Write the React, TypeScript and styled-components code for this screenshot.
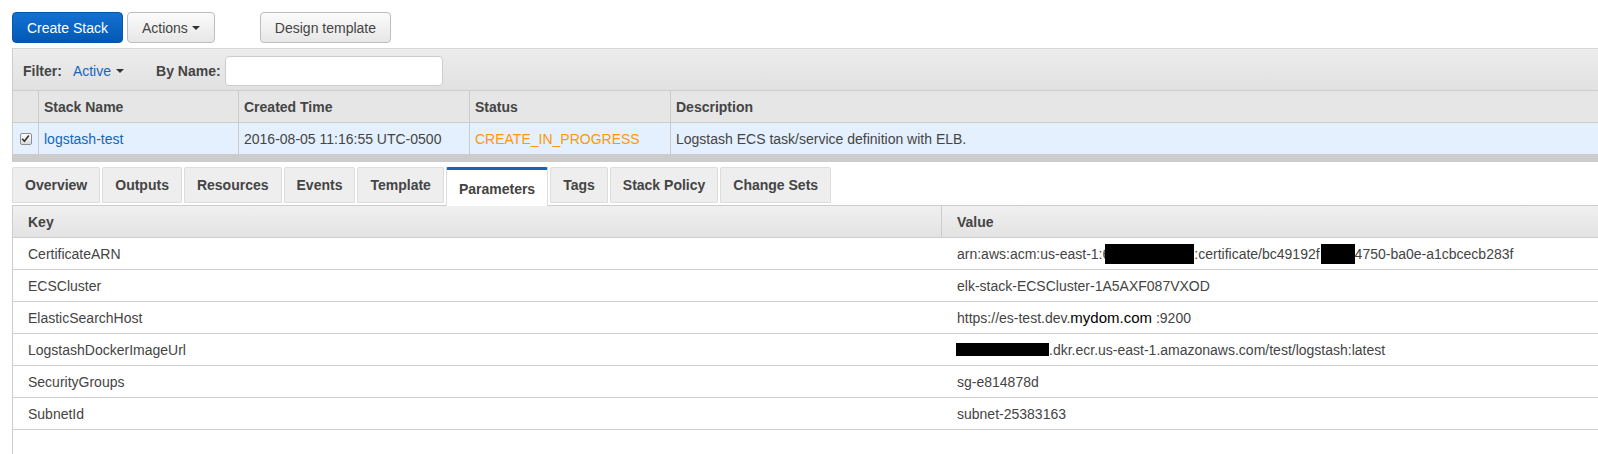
import React from "react";
import styled, { createGlobalStyle } from "styled-components";

const GlobalStyle = createGlobalStyle`
  html, body {
    margin: 0;
    padding: 0;
    background: #ffffff;
  }
  body {
    font-family: "Liberation Sans", Arial, Helvetica, sans-serif;
    font-size: 14px;
    color: #444444;
  }
  * { box-sizing: border-box; }
`;

const Page = styled.div`
  display: flex;
  flex-direction: column;
  width: 1598px;
  min-height: 454px;
  overflow: hidden;
`;

const Toolbar = styled.div`
  display: flex;
  align-items: center;
  gap: 4px;
  padding: 12px 0 0 12px;
  height: 43px;
`;

const Button = styled.button<{ $primary?: boolean; $spaced?: boolean }>`
  display: inline-flex;
  align-items: center;
  gap: 4px;
  height: 31px;
  padding: 0 14px;
  margin-left: ${(p) => (p.$spaced ? "41px" : "0")};
  font-family: inherit;
  font-size: 14px;
  border-radius: 4px;
  cursor: pointer;
  color: ${(p) => (p.$primary ? "#ffffff" : "#444444")};
  border: 1px solid ${(p) => (p.$primary ? "#0a56a6" : "#bdbdbd")};
  background: ${(p) =>
    p.$primary
      ? "linear-gradient(#1471d2, #0259b4)"
      : "linear-gradient(#fbfbfb, #e7e7e7)"};
`;

const Caret = styled.span`
  display: inline-block;
  width: 0;
  height: 0;
  border-left: 4px solid transparent;
  border-right: 4px solid transparent;
  border-top: 4px solid #333333;
`;

const StackPanel = styled.div`
  margin: 5px 0 0 12px;
  border-left: 1px solid #cccccc;
  border-top: 1px solid #d6d6d6;
`;

const FilterBar = styled.div`
  display: flex;
  align-items: center;
  height: 42px;
  padding: 2px 0 0 10px;
  background: linear-gradient(#ededed, #e1e1e1);
  border-bottom: 1px solid #cccccc;
`;

const FilterLabel = styled.span<{ $gap?: number }>`
  font-weight: bold;
  color: #444444;
  margin-left: ${(p) => p.$gap ?? 0}px;
`;

const FilterLink = styled.span`
  display: inline-flex;
  align-items: center;
  gap: 5px;
  margin-left: 11px;
  color: #1166bb;
`;

const SearchInput = styled.input`
  width: 218px;
  height: 30px;
  margin-left: 4px;
  border: 1px solid #cccccc;
  border-radius: 4px;
  background: #ffffff;
  font-family: inherit;
  font-size: 14px;
`;

const StackGrid = styled.div`
  display: grid;
  grid-template-columns: 26px 200px 231px 201px 1fr;
`;

const Cell = styled.div<{ $head?: boolean; $last?: boolean }>`
  display: flex;
  align-items: center;
  height: 32px;
  padding-left: 5px;
  white-space: nowrap;
  font-weight: ${(p) => (p.$head ? "bold" : "normal")};
  background: ${(p) => (p.$head ? "#e6e6e6" : "#e4f0fd")};
  border-bottom: 1px solid #cccccc;
  border-right: ${(p) => (p.$last ? "none" : "1px solid #cccccc")};
`;

const CheckCell = styled(Cell)`
  justify-content: center;
  padding-left: 0;
`;

const CheckBox = styled.span`
  display: inline-flex;
  align-items: center;
  justify-content: center;
  width: 12px;
  height: 12px;
  border: 1px solid #8e8e8e;
  border-radius: 2px;
  background: linear-gradient(#ffffff, #dcdcdc);
`;

const Link = styled.span`
  color: #1166bb;
`;

const StatusText = styled.span`
  color: #ff9900;
`;

const Splitter = styled.div`
  height: 7px;
  margin-left: 12px;
  background: #cccccc;
`;

const TabBar = styled.div`
  display: flex;
  align-items: flex-end;
  gap: 2px;
  margin-top: 5px;
  padding-left: 12px;
  height: 38px;
`;

const Tab = styled.div<{ $active?: boolean }>`
  position: relative;
  z-index: ${(p) => (p.$active ? 2 : 1)};
  display: flex;
  align-items: center;
  height: ${(p) => (p.$active ? "39px" : "36px")};
  margin-bottom: ${(p) => (p.$active ? "-1px" : "2px")};
  padding: ${(p) => (p.$active ? "2px 12px 0" : "0 12px")};
  font-weight: bold;
  color: #444444;
  background: ${(p) => (p.$active ? "#ffffff" : "#eeeeee")};
  border: 1px solid #dddddd;
  border-top: ${(p) => (p.$active ? "3px solid #1166bb" : "1px solid #dddddd")};
  border-bottom: ${(p) => (p.$active ? "none" : "1px solid #dddddd")};
  border-radius: 2px 2px 0 0;
`;

const ParamsPanel = styled.div`
  flex: 1;
  margin-left: 12px;
  border-left: 1px solid #cccccc;
  border-top: 1px solid #cccccc;
  padding-bottom: 30px;
`;

const ParamsGrid = styled.div`
  display: grid;
  grid-template-columns: 929px 1fr;
`;

const ParamHead = styled.div<{ $divider?: boolean }>`
  display: flex;
  align-items: center;
  height: 32px;
  padding-left: 15px;
  font-weight: bold;
  background: linear-gradient(#f0f0f0, #e3e3e3);
  border-bottom: 1px solid #cccccc;
  border-right: ${(p) => (p.$divider ? "1px solid #cccccc" : "none")};
`;

const ParamCell = styled.div`
  display: flex;
  align-items: center;
  height: 32px;
  padding-left: 15px;
  white-space: pre;
  border-bottom: 1px solid #cccccc;
`;

const Redact = styled.span<{ $w: number; $h: number; $shift?: number }>`
  display: inline-block;
  width: ${(p) => p.$w}px;
  height: ${(p) => p.$h}px;
  margin-left: ${(p) => p.$shift ?? 0}px;
  background: #000000;
`;

const Overlay = styled.span`
  font-size: 15px;
  color: #000000;
`;

const tabs = [
  "Overview",
  "Outputs",
  "Resources",
  "Events",
  "Template",
  "Parameters",
  "Tags",
  "Stack Policy",
  "Change Sets",
];

const params: { key: string; value: React.ReactNode }[] = [
  {
    key: "CertificateARN",
    value: (
      <>
        <span>arn:aws:acm:us-east-1:6</span>
        <Redact $w={89} $h={20} $shift={-5} />
        <span>:certificate/bc49192f</span>
        <Redact $w={34} $h={20} $shift={1} />
        <span>4750-ba0e-a1cbcecb283f</span>
      </>
    ),
  },
  { key: "ECSCluster", value: "elk-stack-ECSCluster-1A5AXF087VXOD" },
  {
    key: "ElasticSearchHost",
    value: (
      <>
        <span>https://es-test.dev.</span>
        <Overlay>mydom.com</Overlay>
        <span> :9200</span>
      </>
    ),
  },
  {
    key: "LogstashDockerImageUrl",
    value: (
      <>
        <Redact $w={93} $h={13} $shift={-1} />
        <span>.dkr.ecr.us-east-1.amazonaws.com/test/logstash:latest</span>
      </>
    ),
  },
  { key: "SecurityGroups", value: "sg-e814878d" },
  { key: "SubnetId", value: "subnet-25383163" },
];

export default function App() {
  return (
    <>
      <GlobalStyle />
      <Page>
        <Toolbar>
          <Button $primary>Create Stack</Button>
          <Button>
            <span>Actions</span>
            <Caret />
          </Button>
          <Button $spaced>Design template</Button>
        </Toolbar>

        <StackPanel>
          <FilterBar>
            <FilterLabel>Filter:</FilterLabel>
            <FilterLink>
              <span>Active</span>
              <Caret />
            </FilterLink>
            <FilterLabel $gap={32}>By Name:</FilterLabel>
            <SearchInput />
          </FilterBar>
          <StackGrid>
            <Cell $head />
            <Cell $head>Stack Name</Cell>
            <Cell $head>Created Time</Cell>
            <Cell $head>Status</Cell>
            <Cell $head $last>
              Description
            </Cell>

            <CheckCell>
              <CheckBox>
                <svg width="9" height="9" viewBox="0 0 9 9">
                  <path
                    d="M1.2 4.8 L3.4 7.2 L7.8 1.4"
                    fill="none"
                    stroke="#333"
                    strokeWidth="1.6"
                  />
                </svg>
              </CheckBox>
            </CheckCell>
            <Cell>
              <Link>logstash-test</Link>
            </Cell>
            <Cell>2016-08-05 11:16:55 UTC-0500</Cell>
            <Cell>
              <StatusText>CREATE_IN_PROGRESS</StatusText>
            </Cell>
            <Cell $last>Logstash ECS task/service definition with ELB.</Cell>
          </StackGrid>
        </StackPanel>
        <Splitter />

        <TabBar>
          {tabs.map((t) => (
            <Tab key={t} $active={t === "Parameters"}>
              {t}
            </Tab>
          ))}
        </TabBar>

        <ParamsPanel>
          <ParamsGrid>
            <ParamHead $divider>Key</ParamHead>
            <ParamHead>Value</ParamHead>
            {params.map((p) => (
              <React.Fragment key={p.key}>
                <ParamCell>{p.key}</ParamCell>
                <ParamCell>{p.value}</ParamCell>
              </React.Fragment>
            ))}
          </ParamsGrid>
        </ParamsPanel>
      </Page>
    </>
  );
}
